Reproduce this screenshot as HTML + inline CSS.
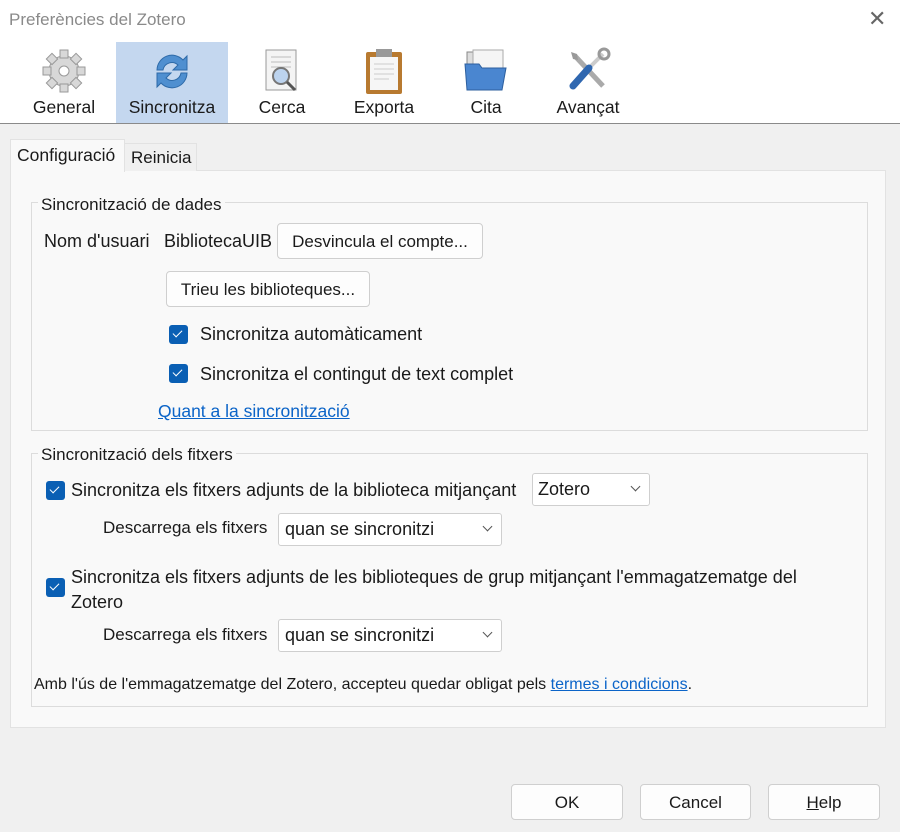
<!DOCTYPE html>
<html><head><meta charset="utf-8"><style>
*{box-sizing:border-box}
body{margin:0;width:900px;height:832px;background:#f0f0f0;font-family:"Liberation Sans",sans-serif;font-size:18px;color:#1a1a1a;position:relative;overflow:hidden}
.a{position:absolute;white-space:nowrap}
.top{position:absolute;left:0;top:0;width:900px;height:124px;background:#fff;border-bottom:1px solid #8a8a8a}
.tb{position:absolute;top:42px;height:81px;text-align:center;font-size:17.5px}
.tb span{position:absolute;left:0;right:0;top:55px}
.tb svg{position:absolute;left:50%;margin-left:-25px;top:4px}
.btn{position:absolute;background:#fdfdfd;border:1px solid #cfcfcf;border-radius:4px;text-align:center;font-size:17px}
.chk{position:absolute;width:19px;height:19px;background:#0a5fb4;border-radius:3px}
.chk:after{content:"";position:absolute;left:6px;top:3px;width:4px;height:8px;border:solid #fff;border-width:0 1.5px 1.5px 0;transform:rotate(45deg)}
.gb{position:absolute;border:1px solid #dcdcdc}
.sel{position:absolute;background:#fff;border:1px solid #cfcfcf;border-radius:3px}
.sel:after{content:"";position:absolute;right:10px;top:9px;width:6px;height:6px;border:solid #555;border-width:0 1px 1px 0;transform:rotate(45deg)}
a{color:#0b64c8;text-decoration:underline}
</style></head><body>
<div class="top"></div>
<div class="a" style="left:9px;top:10px;font-size:17px;color:#8a8a8a">Preferències del Zotero</div>
<div class="a" style="left:868px;top:6px;font-size:22px;color:#666">✕</div>

<div class="tb" style="left:18px;width:92px"><svg width="50" height="50" viewBox="0 0 50 50"><g fill="#d8d8d8" stroke="#999"><circle cx="25" cy="25" r="15"/><g stroke-width="1"><rect x="21" y="4" width="8" height="8"/><rect x="21" y="38" width="8" height="8"/><rect x="4" y="21" width="8" height="8"/><rect x="38" y="21" width="8" height="8"/><rect x="21" y="4" width="8" height="8" transform="rotate(45 25 25)"/><rect x="21" y="38" width="8" height="8" transform="rotate(45 25 25)"/><rect x="4" y="21" width="8" height="8" transform="rotate(45 25 25)"/><rect x="38" y="21" width="8" height="8" transform="rotate(45 25 25)"/></g></g><circle cx="25" cy="25" r="5" fill="#fff" stroke="#999"/></svg><span>General</span></div>
<div class="tb" style="left:116px;width:112px;background:#c4d7ef"><svg width="50" height="50" viewBox="0 0 50 50"><path d="M10 24a15 15 0 0 1 26-10l4-4v14H26l5-5a9 9 0 0 0-15 5z" fill="#4f8fd0" stroke="#2e6aa8"/><path d="M40 27a15 15 0 0 1-26 10l-4 4V27h14l-5 5a9 9 0 0 0 15-5z" fill="#4f8fd0" stroke="#2e6aa8"/></svg><span>Sincronitza</span></div>
<div class="tb" style="left:236px;width:92px"><svg width="50" height="50" viewBox="0 0 50 50"><rect x="9" y="4" width="30" height="40" fill="#f4f4f4" stroke="#999"/><g stroke="#bbb"><line x1="14" y1="11" x2="34" y2="11"/><line x1="14" y1="16" x2="34" y2="16"/><line x1="14" y1="21" x2="34" y2="21"/></g><circle cx="24" cy="30" r="8" fill="#bcd3ee" stroke="#777" stroke-width="2"/><line x1="30" y1="36" x2="38" y2="44" stroke="#555" stroke-width="3"/></svg><span>Cerca</span></div>
<div class="tb" style="left:338px;width:92px"><svg width="50" height="50" viewBox="0 0 50 50"><rect x="7" y="6" width="36" height="42" fill="#b87a30" rx="2"/><rect x="11" y="11" width="28" height="33" fill="#f6f6f6"/><rect x="17" y="3" width="16" height="8" fill="#999"/><g stroke="#ccc"><line x1="15" y1="18" x2="35" y2="18"/><line x1="15" y1="23" x2="35" y2="23"/><line x1="15" y1="28" x2="35" y2="28"/><line x1="15" y1="33" x2="30" y2="33"/></g></svg><span>Exporta</span></div>
<div class="tb" style="left:440px;width:92px"><svg width="50" height="50" viewBox="0 0 50 50"><rect x="6" y="6" width="34" height="30" fill="#ddd" stroke="#888"/><rect x="12" y="4" width="30" height="28" fill="#f5f5f5" stroke="#aaa"/><path d="M4 18h14l3 4h24l-4 22H6z" fill="#4a86d0" stroke="#2d5f9e"/></svg><span>Cita</span></div>
<div class="tb" style="left:542px;width:92px"><svg width="50" height="50" viewBox="0 0 50 50"><path d="M12 10l28 30" stroke="#aaa" stroke-width="5"/><path d="M8 6l6 2 1 6-5-1z" fill="#999"/><path d="M40 8l-12 12" stroke="#ccc" stroke-width="4"/><path d="M26 22L10 40" stroke="#2f67b0" stroke-width="7" stroke-linecap="round"/><circle cx="41" cy="8" r="5" fill="none" stroke="#999" stroke-width="3"/></svg><span>Avançat</span></div>

<div class="a" style="left:10px;top:170px;width:876px;height:558px;background:#f9f9f9;border:1px solid #e2e2e2"></div>
<div class="a" style="left:10px;top:139px;width:115px;height:33px;background:#f9f9f9;border:1px solid #e2e2e2;border-bottom:none;padding:5px 0 0 6px;font-size:17.5px">Configuració</div>
<div class="a" style="left:124px;top:143px;width:73px;height:28px;background:#f0f0f0;border:1px solid #e2e2e2;border-bottom:none;padding:4px 0 0 6px;font-size:17px">Reinicia</div>

<div class="gb" style="left:31px;top:202px;width:837px;height:229px"></div>
<div class="a" style="left:38px;top:195px;background:#f9f9f9;padding:0 3px;font-size:17px">Sincronització de dades</div>
<div class="a" style="left:44px;top:231px">Nom d'usuari</div>
<div class="a" style="left:164px;top:231px">BibliotecaUIB</div>
<div class="btn" style="left:277px;top:223px;width:206px;height:36px;padding-top:8px">Desvincula el compte...</div>
<div class="btn" style="left:166px;top:271px;width:204px;height:36px;padding-top:8px">Trieu les biblioteques...</div>
<div class="chk" style="left:169px;top:325px"></div><div class="a" style="left:200px;top:324px">Sincronitza automàticament</div>
<div class="chk" style="left:169px;top:364px"></div><div class="a" style="left:200px;top:364px">Sincronitza el contingut de text complet</div>
<div class="a" style="left:158px;top:401px;font-size:17.5px"><a>Quant a la sincronització</a></div>

<div class="gb" style="left:31px;top:453px;width:837px;height:254px"></div>
<div class="a" style="left:38px;top:445px;background:#f9f9f9;padding:0 3px;font-size:17px">Sincronització dels fitxers</div>
<div class="chk" style="left:46px;top:481px"></div><div class="a" style="left:71px;top:480px">Sincronitza els fitxers adjunts de la biblioteca mitjançant</div>
<div class="sel" style="left:532px;top:473px;width:118px;height:33px;padding:5px 0 0 5px">Zotero</div>
<div class="a" style="left:103px;top:518px;font-size:17px">Descarrega els fitxers</div>
<div class="sel" style="left:278px;top:513px;width:224px;height:33px;padding:5px 0 0 6px">quan se sincronitzi</div>
<div class="chk" style="left:46px;top:578px"></div><div class="a" style="left:71px;top:565px;line-height:25px">Sincronitza els fitxers adjunts de les biblioteques de grup mitjançant l'emmagatzematge del<br>Zotero</div>
<div class="a" style="left:103px;top:625px;font-size:17px">Descarrega els fitxers</div>
<div class="sel" style="left:278px;top:619px;width:224px;height:33px;padding:5px 0 0 6px">quan se sincronitzi</div>
<div class="a" style="left:34px;top:676px;font-size:16px">Amb l'ús de l'emmagatzematge del Zotero, accepteu quedar obligat pels <a>termes i condicions</a>.</div>

<div class="btn" style="left:511px;top:784px;width:112px;height:36px;padding-top:8px">OK</div>
<div class="btn" style="left:640px;top:784px;width:111px;height:36px;padding-top:8px">Cancel</div>
<div class="btn" style="left:768px;top:784px;width:112px;height:36px;padding-top:8px"><u>H</u>elp</div>
</body></html>
